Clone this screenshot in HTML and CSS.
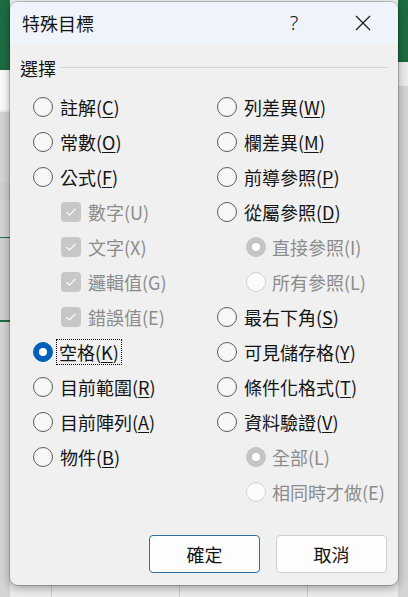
FILE: index.html
```html
<!DOCTYPE html>
<html lang="zh-Hant">
<head>
<meta charset="utf-8">
<title>特殊目標</title>
<link rel="stylesheet" href="styles.css">
</head>
<body>
<div class="dialog">
  <div class="titlebar">
    <div class="title">特殊目標</div>
    <div class="tbtn help">?</div>
    <div class="tbtn close">
      <svg width="16" height="16" viewBox="0 0 16 16"><path d="M1 1 L15 15 M15 1 L1 15" stroke="#1a1a1a" stroke-width="1.2" fill="none"/></svg>
    </div>
  </div>
  <div class="content">
    <div class="group-head"><span>選擇</span><div class="rule"></div></div>
    <div class="options">
      <div class="col">
        <div class="row"><span class="radio"></span><span class="lbl">註解(<u>C</u>)</span></div>
        <div class="row"><span class="radio"></span><span class="lbl">常數(<u>O</u>)</span></div>
        <div class="row"><span class="radio"></span><span class="lbl">公式(<u>F</u>)</span></div>
        <div class="row sub"><span class="check"><svg width="12" height="10" viewBox="0 0 12 10"><path d="M1.5 5.2 L4.5 8 L10.5 1.8" stroke="#fff" stroke-width="1.2" fill="none"/></svg></span><span class="lbl dis">數字(U)</span></div>
        <div class="row sub"><span class="check"><svg width="12" height="10" viewBox="0 0 12 10"><path d="M1.5 5.2 L4.5 8 L10.5 1.8" stroke="#fff" stroke-width="1.2" fill="none"/></svg></span><span class="lbl dis">文字(X)</span></div>
        <div class="row sub"><span class="check"><svg width="12" height="10" viewBox="0 0 12 10"><path d="M1.5 5.2 L4.5 8 L10.5 1.8" stroke="#fff" stroke-width="1.2" fill="none"/></svg></span><span class="lbl dis">邏輯值(G)</span></div>
        <div class="row sub"><span class="check"><svg width="12" height="10" viewBox="0 0 12 10"><path d="M1.5 5.2 L4.5 8 L10.5 1.8" stroke="#fff" stroke-width="1.2" fill="none"/></svg></span><span class="lbl dis">錯誤值(E)</span></div>
        <div class="row"><span class="radio on"></span><span class="lbl focus">空格(<u>K</u>)</span></div>
        <div class="row"><span class="radio"></span><span class="lbl">目前範圍(<u>R</u>)</span></div>
        <div class="row"><span class="radio"></span><span class="lbl">目前陣列(<u>A</u>)</span></div>
        <div class="row"><span class="radio"></span><span class="lbl">物件(<u>B</u>)</span></div>
      </div>
      <div class="col">
        <div class="row"><span class="radio"></span><span class="lbl">列差異(<u>W</u>)</span></div>
        <div class="row"><span class="radio"></span><span class="lbl">欄差異(<u>M</u>)</span></div>
        <div class="row"><span class="radio"></span><span class="lbl">前導參照(<u>P</u>)</span></div>
        <div class="row"><span class="radio"></span><span class="lbl">從屬參照(<u>D</u>)</span></div>
        <div class="row sub2"><span class="radio dis on"></span><span class="lbl dis">直接參照(I)</span></div>
        <div class="row sub2"><span class="radio dis"></span><span class="lbl dis">所有參照(L)</span></div>
        <div class="row"><span class="radio"></span><span class="lbl">最右下角(<u>S</u>)</span></div>
        <div class="row"><span class="radio"></span><span class="lbl">可見儲存格(<u>Y</u>)</span></div>
        <div class="row"><span class="radio"></span><span class="lbl">條件化格式(<u>T</u>)</span></div>
        <div class="row"><span class="radio"></span><span class="lbl">資料驗證(<u>V</u>)</span></div>
        <div class="row sub2"><span class="radio dis on"></span><span class="lbl dis">全部(L)</span></div>
        <div class="row sub2"><span class="radio dis"></span><span class="lbl dis">相同時才做(E)</span></div>
      </div>
    </div>
    <div class="buttons">
      <button class="btn primary">確定</button>
      <button class="btn">取消</button>
    </div>
  </div>
</div>
</body>
</html>
```

FILE: styles.css
```css
html, body {
  margin: 0;
  padding: 0;
}
body {
  width: 408px;
  height: 597px;
  overflow: hidden;
  font-family: "Noto Sans CJK TC", "Noto Sans", sans-serif;
  color: #141414;
  background:
    linear-gradient(#1d6b41, #1d6b41) 0 0 / 10px 70px no-repeat,
    linear-gradient(#1d6b41, #1d6b41) 398px 0 / 10px 62px no-repeat,
    linear-gradient(#8fc4a2, #8fc4a2) 398px 5px / 10px 45px no-repeat,
    linear-gradient(#fafafa, #fafafa) 0 70px / 10px 40px no-repeat,
    linear-gradient(#cfcfcf, #cfcfcf) 0 182px / 10px 18px no-repeat,
    linear-gradient(#cfcfcf, #cfcfcf) 0 238px / 10px 82px no-repeat,
    linear-gradient(#1d6b41, #1d6b41) 0 237px / 10px 2px no-repeat,
    linear-gradient(#1d6b41, #1d6b41) 0 320px / 10px 2px no-repeat,
    linear-gradient(to bottom, transparent 34px, #d4d4d4 34px, #d4d4d4 35px) 0 78px / 10px 520px repeat-y,
    linear-gradient(to bottom, transparent 24px, #d4d4d4 24px, #d4d4d4 25px) 398px 62px / 10px 540px repeat-y,
    linear-gradient(to right, transparent 51px, #cfcfcf 51px, #cfcfcf 52px, transparent 52px, transparent 179px, #cfcfcf 179px, #cfcfcf 180px, transparent 180px, transparent 307px, #cfcfcf 307px, #cfcfcf 308px, transparent 308px) 0 585px / 408px 12px no-repeat,
    #ececec;
}

.dialog {
  margin: 2px 0 0 10px;
  width: 388px;
  height: 583px;
  background: #f0f0f0;
  border-radius: 8px;
  overflow: hidden;
  box-shadow: 0 0 0 1px rgba(0, 0, 0, 0.18), 0 3px 10px rgba(0, 0, 0, 0.35);
  display: flex;
  flex-direction: column;
}

.titlebar {
  height: 41px;
  flex: none;
  background: #eef4f9;
  display: flex;
  align-items: center;
  padding: 0 12px 0 12px;
}
.title {
  flex: 1;
  font-size: 18px;
  line-height: 20px;
  padding-top: 1px;
}
.tbtn {
  width: 46px;
  height: 30px;
  display: flex;
  align-items: center;
  justify-content: center;
}
.help {
  font-family: "Noto Sans", sans-serif;
  font-size: 20px;
  font-weight: 300;
  margin-right: 23px;
}
.close svg {
  display: block;
}

.content {
  flex: 1;
  display: flex;
  flex-direction: column;
  padding: 13px 11px 12px 10px;
}

.group-head {
  height: 24px;
  display: flex;
  align-items: center;
  font-size: 18px;
}
.group-head span {
  line-height: 24px;
}
.rule {
  flex: 1;
  height: 1px;
  background: #d6d6d6;
  margin-left: 5px;
  margin-top: -2px;
}

.options {
  display: grid;
  grid-template-columns: 184px 1fr;
  padding: 9px 0 0 13px;
}
.row {
  height: 35px;
  display: flex;
  align-items: center;
  gap: 7px;
  font-size: 18px;
}
.row.sub {
  padding-left: 28px;
}
.row.sub2 {
  padding-left: 29px;
  gap: 6px;
}
.lbl {
  line-height: 22px;
  white-space: nowrap;
}
.lbl u {
  text-underline-offset: 2px;
  text-decoration-thickness: 1px;
}
.lbl.dis {
  color: #8c8c8c;
}
.lbl.focus {
  outline: 1px dotted #000;
  outline-offset: 0;
  padding: 1px 2px;
  margin-left: -3px;
}

.radio {
  width: 20px;
  height: 20px;
  box-sizing: border-box;
  border: 1px solid #5c5c5c;
  border-radius: 50%;
  background: #f7f7f7;
  flex: none;
  position: relative;
}
.radio.on {
  background: #005fb8;
  border-color: #005fb8;
}
.radio.on::after {
  content: "";
  position: absolute;
  left: 5px;
  top: 5px;
  width: 8px;
  height: 8px;
  border-radius: 50%;
  background: #fff;
}
.radio.dis {
  border-color: #d2d2d2;
  background: #fbfbfb;
}
.radio.dis.on {
  background: #c4c4c4;
  border-color: #c4c4c4;
}

.check {
  width: 20px;
  height: 20px;
  border-radius: 4px;
  background: #c7c7c7;
  flex: none;
  display: flex;
  align-items: center;
  justify-content: center;
}
.check svg {
  display: block;
}

.buttons {
  margin-top: auto;
  display: flex;
  justify-content: flex-end;
  gap: 16px;
}
.btn {
  width: 111px;
  height: 38px;
  box-sizing: border-box;
  font-family: "Noto Sans CJK TC", sans-serif;
  font-size: 18px;
  color: #141414;
  background: #fdfdfd;
  border: 1px solid #d0d0d0;
  border-radius: 4px;
  padding: 0;
}
.btn.primary {
  border-color: #2a6ea3;
}
```
